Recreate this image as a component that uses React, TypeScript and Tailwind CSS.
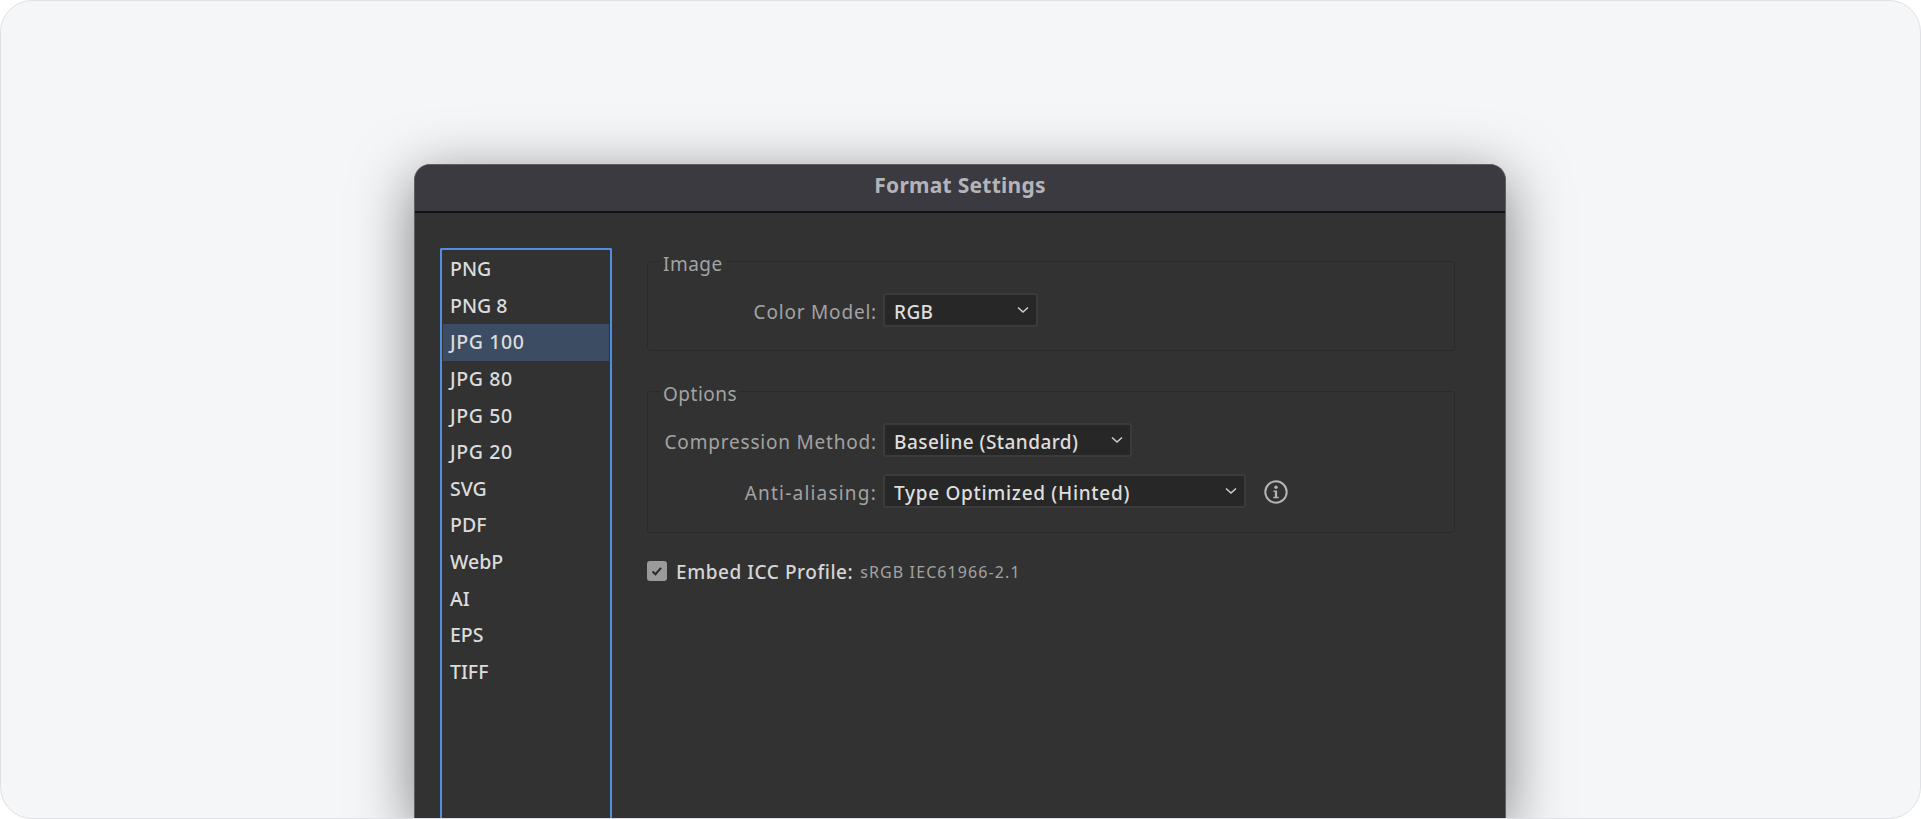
import React from "react";

const formats = ["PNG", "PNG 8", "JPG 100", "JPG 80", "JPG 50", "JPG 20", "SVG", "PDF", "WebP", "AI", "EPS", "TIFF"];

function Chevron() {
  return (
    <svg width="12" height="8" viewBox="0 0 12 8" fill="none" className="shrink-0">
      <path d="M1 1.5 L6 6 L11 1.5" stroke="#cfcfcf" strokeWidth="1.5" />
    </svg>
  );
}

function Select({ value, width, tracking }: { value: string; width: string; tracking: string }) {
  return (
    <div className={`flex h-[34px] items-center justify-between rounded-[3px] border-2 border-[#3b3b3b] bg-[#272727] pl-[9px] pr-[7px] text-[19px] font-medium text-[#dedede] ${width}`}>
      <span className={`pt-[4px] ${tracking}`}>{value}</span>
      <Chevron />
    </div>
  );
}

function Label({ children, tracking }: { children: React.ReactNode; tracking: string }) {
  return <div className={`h-[34px] w-[235px] pr-[6px] pt-[2px] text-right text-[#a3a3a3] text-[19px] leading-[34px] ${tracking}`}>{children}</div>;
}

function Group({ title, className, children }: { title: string; className: string; children: React.ReactNode }) {
  return (
    <fieldset className={`w-[808px] rounded-[3px] border border-[#2a2a2a] ${className}`}>
      <legend className="ml-[13px] translate-y-[3px] px-[2px] text-[19px] leading-[24px] tracking-[0.5px] text-[#a3a3a3]">{title}</legend>
      {children}
    </fieldset>
  );
}

export default function App() {
  return (
    <div className="flex h-[819px] w-[1921px] flex-col items-center overflow-hidden rounded-[32px] border border-[#dfe1e4] bg-[#f5f6f8] pt-[163px] [font-family:'Noto_Sans','Open_Sans',sans-serif]">
      <div className="mr-[1px] flex w-[1092px] flex-1 flex-col overflow-hidden rounded-t-[16px] border-x border-t border-[#5f5f62] bg-[#323232] shadow-[0_14px_60px_rgba(0,0,0,0.5)]">
        <div className="flex h-[48px] shrink-0 items-center justify-center border-b-2 border-[#111111] bg-[#3b3a40] pb-[5px] text-[21px] font-bold tracking-[0.25px] text-[#b4b4b8]">
          Format Settings
        </div>
        <div className="flex flex-1">
          <div className="ml-[25px] mt-[35px] w-[172px] rounded-t-[2px] border-x-2 border-t-2 border-[#4f8fe0] px-[1px] pt-[1px]">
            {formats.map((f) => (
              <div
                key={f}
                className={`flex h-[36.6px] items-center pb-[1px] pl-[7px] text-[19.5px] font-medium text-[#dcdcdc] ${f === "JPG 100" ? "bg-[#3c4d63]" : ""} ${f.startsWith("JPG") ? "tracking-[0.6px]" : ""}`}
              >
                {f}
              </div>
            ))}
          </div>
          <div className="ml-[35px] mt-[36px] flex flex-col">
            <Group title="Image" className="h-[102px]">
              <div className="mt-[20px] flex items-center">
                <Label tracking="tracking-[0.8px]">Color Model:</Label>
                <Select value="RGB" width="w-[155px]" tracking="tracking-[0.4px]" />
              </div>
            </Group>
            <Group title="Options" className="mt-[28px] h-[154px]">
              <div className="mt-[20px] flex items-center">
                <Label tracking="tracking-[0.8px]">Compression Method:</Label>
                <Select value="Baseline (Standard)" width="w-[249px]" tracking="tracking-[0.45px]" />
              </div>
              <div className="mt-[17px] flex items-center">
                <Label tracking="tracking-[1.2px]">Anti-aliasing:</Label>
                <Select value="Type Optimized (Hinted)" width="w-[363px]" tracking="tracking-[0.7px]" />
                <svg width="24" height="24" viewBox="0 0 24 24" fill="none" className="ml-[18px] mt-[2px]">
                  <circle cx="12" cy="12" r="10.7" stroke="#b4b4b4" strokeWidth="2" />
                  <circle cx="12" cy="7.3" r="1.7" fill="#b4b4b4" />
                  <path d="M9.5 10.5h3.6v6.2h1.6v1.5H9.3v-1.5h1.6v-4.7H9.5z" fill="#b4b4b4" />
                </svg>
              </div>
            </Group>
            <div className="mt-[23px] flex items-center">
              <div className="flex h-[20px] w-[20px] items-center justify-center rounded-[3px] bg-[#9b9b9b]">
                <svg width="14" height="12" viewBox="0 0 14 12" fill="none">
                  <path d="M2.5 6.5 L5.5 9.2 L11 2.8" stroke="#2b2b2b" strokeWidth="2" />
                </svg>
              </div>
              <span className="ml-[9px] pt-[2px] text-[19px] font-medium tracking-[0.55px] text-[#d6d6d6]">Embed ICC Profile:</span>
              <span className="ml-[7px] pt-[2px] text-[16px] tracking-[1.1px] text-[#a3a3a3]">sRGB IEC61966-2.1</span>
            </div>
          </div>
        </div>
      </div>
    </div>
  );
}
